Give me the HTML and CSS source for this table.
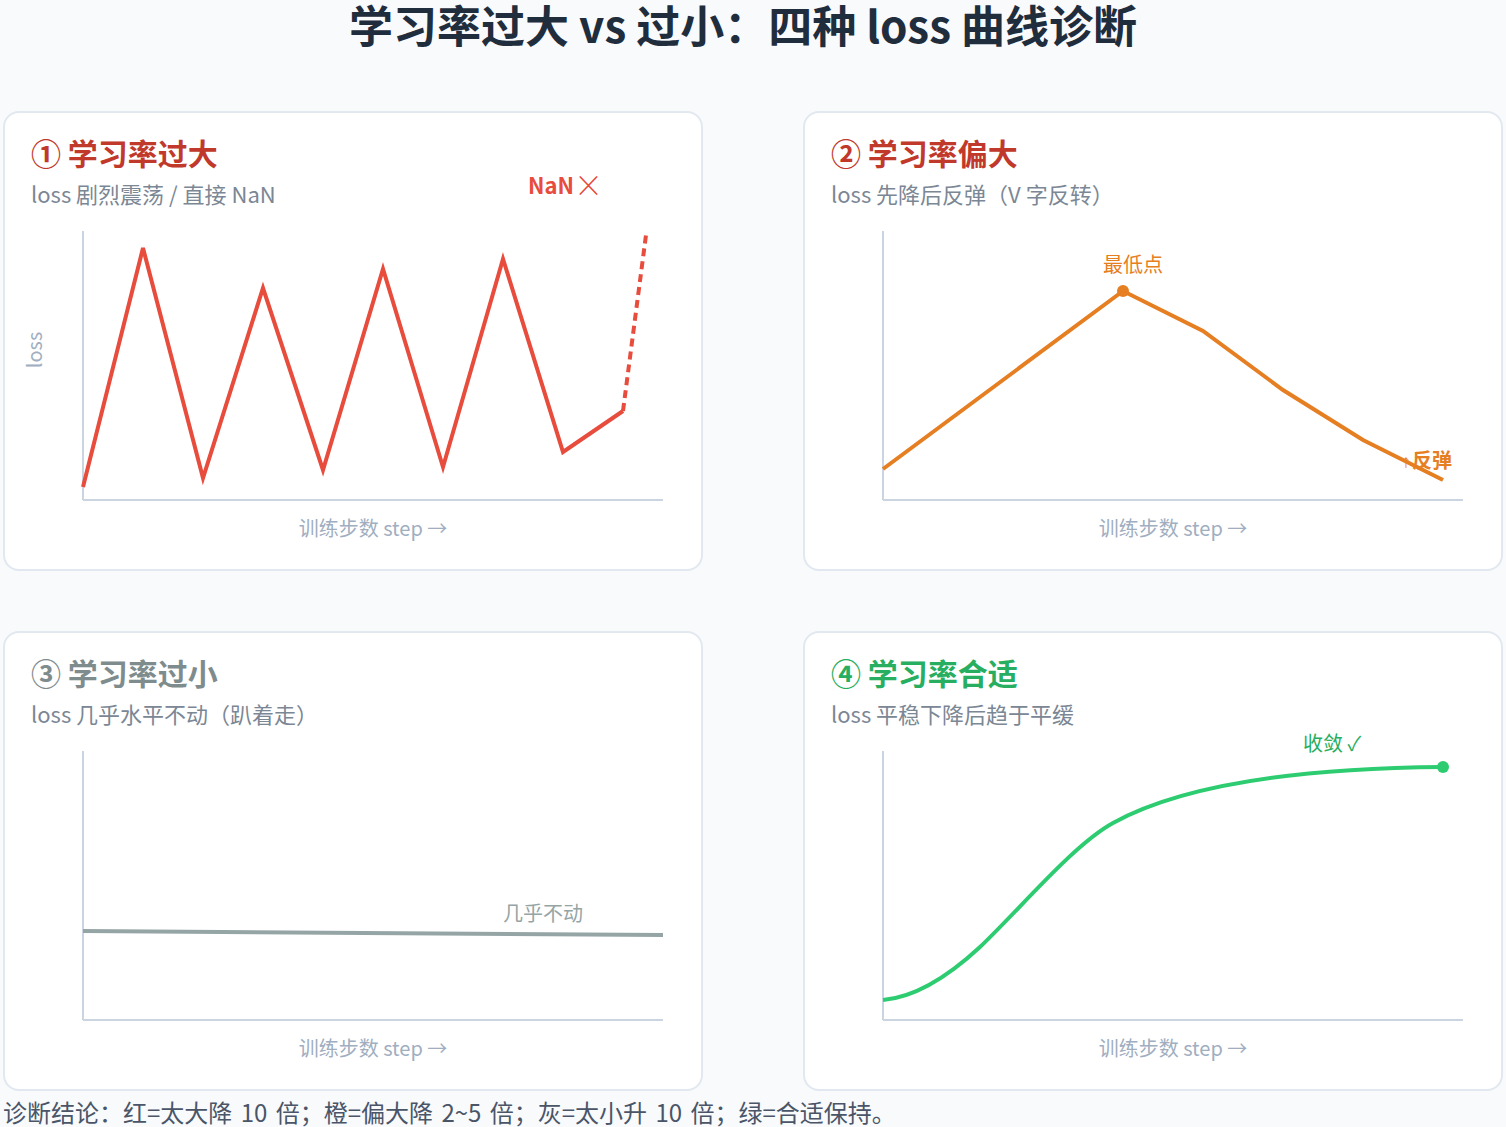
FILE: index.html
```html
<!DOCTYPE html>
<html lang="zh-CN">
<head>
<meta charset="utf-8">
<title>学习率过大 vs 过小：四种 loss 曲线诊断</title>
<link rel="stylesheet" href="styles.css">
</head>
<body>
<div class="page">
  <h1 class="title">学习率过大 vs 过小：四种 loss 曲线诊断</h1>
  <div class="grid">
    <section class="card">
      <header class="card-head">
        <h2 class="card-title red">① 学习率过大</h2>
        <p class="card-sub">loss 剧烈震荡 / 直接 NaN</p>
      </header>
      <svg class="chart" viewBox="2 104 696 354" width="696" height="354">
        <line class="axis" x1="80" y1="120" x2="80" y2="389"/>
        <line class="axis" x1="80" y1="389" x2="660" y2="389"/>
        <text class="ylabel" transform="translate(39 239) rotate(-90)">loss</text>
        <text class="xlabel" x="370" y="425">训练步数 step →</text>
        <polyline class="line-red" points="80,376 140,137 200,367 260,177 320,359 380,158 440,356 500,148 560,341 620,300"/>
        <line class="line-red dashed" x1="620" y1="300" x2="643" y2="124"/>
        <text class="nan" x="525" y="83">NaN</text>
        <text class="nan-x" x="577" y="81">╳</text>
      </svg>
    </section>

    <section class="card">
      <header class="card-head">
        <h2 class="card-title red">② 学习率偏大</h2>
        <p class="card-sub">loss 先降后反弹（V 字反转）</p>
      </header>
      <svg class="chart" viewBox="2 104 696 354" width="696" height="354">
        <line class="axis" x1="80" y1="120" x2="80" y2="389"/>
        <line class="axis" x1="80" y1="389" x2="660" y2="389"/>
        <text class="xlabel" x="370" y="425">训练步数 step →</text>
        <polyline class="line-orange" points="80,358 320,180 400,220 480,279 560,329 640,369"/>
        <circle class="dot-orange" cx="320" cy="180" r="6"/>
        <text class="lbl orange" x="330" y="161" text-anchor="middle">最低点</text>
        <text class="lbl orange bold" x="649" y="357" text-anchor="end"><tspan class="arrow">↑</tspan>反弹</text>
      </svg>
    </section>

    <section class="card">
      <header class="card-head">
        <h2 class="card-title grey">③ 学习率过小</h2>
        <p class="card-sub">loss 几乎水平不动（趴着走）</p>
      </header>
      <svg class="chart" viewBox="2 104 696 354" width="696" height="354">
        <line class="axis" x1="80" y1="120" x2="80" y2="389"/>
        <line class="axis" x1="80" y1="389" x2="660" y2="389"/>
        <text class="xlabel" x="370" y="425">训练步数 step →</text>
        <line class="line-grey" x1="80" y1="300" x2="660" y2="304"/>
        <text class="lbl greytxt" x="540" y="290" text-anchor="middle">几乎不动</text>
      </svg>
    </section>

    <section class="card">
      <header class="card-head">
        <h2 class="card-title green">④ 学习率合适</h2>
        <p class="card-sub">loss 平稳下降后趋于平缓</p>
      </header>
      <svg class="chart" viewBox="2 104 696 354" width="696" height="354">
        <line class="axis" x1="80" y1="120" x2="80" y2="389"/>
        <line class="axis" x1="80" y1="389" x2="660" y2="389"/>
        <text class="xlabel" x="370" y="425">训练步数 step →</text>
        <path class="line-green" d="M80,369 C115,366 150,341 177,316 C217,278 270,214 310,192 C390,148 520,137 640,136"/>
        <circle class="dot-green" cx="640" cy="136" r="6"/>
        <text class="lbl greentxt" x="500" y="120">收敛 ✓</text>
      </svg>
    </section>
  </div>
  <p class="footnote">诊断结论：红=太大降 10 倍；橙=偏大降 2~5 倍；灰=太小升 10 倍；绿=合适保持。</p>
</div>
</body>
</html>
```

FILE: styles.css
```css
html, body {
  margin: 0;
  padding: 0;
  background: #f8fafc;
}

body {
  font-family: "Noto Sans CJK SC", "Noto Sans", sans-serif;
  color: #1e293b;
}

.page {
  width: 1500px;
  padding: 0 3px;
}

.title {
  margin: 0;
  padding-right: 20px;
  font-size: 44px;
  line-height: 48px;
  font-weight: 700;
  text-align: center;
  color: #1f2d3d;
}

.grid {
  margin-top: 63px;
  display: grid;
  grid-template-columns: 700px 700px;
  grid-template-rows: 460px 460px;
  column-gap: 100px;
  row-gap: 60px;
}

.card {
  box-sizing: border-box;
  background: #ffffff;
  border: 2px solid #e2e8f0;
  border-radius: 16px;
  display: flex;
  flex-direction: column;
}

.card-head {
  box-sizing: border-box;
  height: 102px;
  padding: 21px 0 0 26px;
}

.card-title {
  margin: 0;
  font-size: 30px;
  line-height: 36px;
  font-weight: 700;
}

.card-title.red { color: #c0392b; }
.card-title.grey { color: #7f8c8d; }
.card-title.green { color: #27ae60; }

.card-sub {
  margin: 8px 0 0;
  font-size: 22px;
  line-height: 30px;
  color: #7b8794;
}

.chart {
  display: block;
  overflow: visible;
}

.axis {
  stroke: #cbd5e1;
  stroke-width: 2;
}

.ylabel {
  font-size: 20px;
  fill: #a0aec0;
  text-anchor: middle;
}

.xlabel {
  font-size: 20px;
  fill: #a0aec0;
  text-anchor: middle;
}

.line-red {
  fill: none;
  stroke: #e74c3c;
  stroke-width: 4;
}

.dashed {
  stroke-dasharray: 8 5;
}

.nan {
  font-size: 22px;
  font-weight: 700;
  fill: #e74c3c;
}

.nan-x {
  font-size: 17px;
  font-weight: 400;
  fill: #e74c3c;
  stroke: #e74c3c;
  stroke-width: 0.7;
}

.line-orange {
  fill: none;
  stroke: #e67e22;
  stroke-width: 4;
}

.dot-orange { fill: #e67e22; }

.lbl { font-size: 20px; }
.lbl.bold { font-weight: 700; }
.arrow { font-size: 12px; font-weight: 400; }
.orange { fill: #e67e22; }
.greytxt { fill: #95a5a6; }
.greentxt { fill: #27ae60; }

.line-grey {
  stroke: #95a5a6;
  stroke-width: 4;
}

.line-green {
  fill: none;
  stroke: #2ecc71;
  stroke-width: 4;
}

.dot-green { fill: #2ecc71; }

.footnote {
  margin: 6px 0 0;
  font-size: 24px;
  line-height: 30px;
  word-spacing: 3px;
  color: #4a5568;
}
```
